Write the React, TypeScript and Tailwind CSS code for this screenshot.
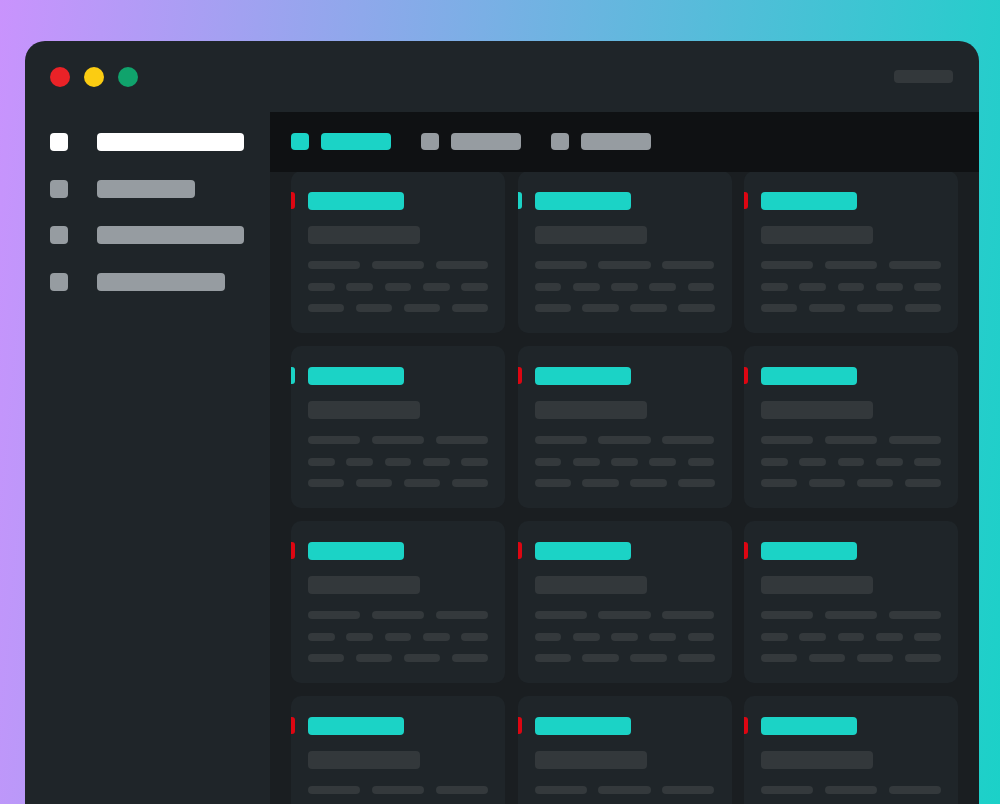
const navRows = [
  { bar: "w-[147px] bg-white", icon: "bg-white" },
  { bar: "w-[98px] bg-[#969ca1]", icon: "bg-[#969ca1]" },
  { bar: "w-[147px] bg-[#969ca1]", icon: "bg-[#969ca1]" },
  { bar: "w-[128px] bg-[#969ca1]", icon: "bg-[#969ca1]" },
];

const accents = ["red", "teal", "red", "teal", "red", "red", "red", "red", "red", "red", "red", "red"];

function Line({ count }: { count: number }) {
  return (
    <div className="flex gap-[11.5px]">
      {Array.from({ length: count }).map((_, i) => (
        <div key={i} className="h-2 flex-1 rounded-full bg-[#34393c]" />
      ))}
    </div>
  );
}

function Card({ accent }: { accent: string }) {
  return (
    <div className="relative h-[162px] rounded-[10px] bg-[#1f2529] px-[17px] pt-[21px]">
      <div
        className={`absolute left-0 top-[21px] h-[17px] w-1 rounded-r-[3px] ${
          accent === "red" ? "bg-[#dd0612]" : "bg-[#1bd3c6]"
        }`}
      />
      <div className="h-[17.5px] w-[96px] rounded-[4px] bg-[#1bd3c6]" />
      <div className="mt-[16.5px] h-[18px] w-[112px] rounded-[4px] bg-[#33383b]" />
      <div className="mt-[17px] flex flex-col gap-[13.5px]">
        <Line count={3} />
        <Line count={5} />
        <Line count={4} />
      </div>
    </div>
  );
}

function Tab({ active }: { active?: boolean }) {
  const color = active ? "bg-[#1bd3c6]" : "bg-[#969ca1]";
  return (
    <div className="flex items-center gap-[12.5px]">
      <div className={`h-[17.5px] w-[17.5px] rounded-[4px] ${color}`} />
      <div className={`h-[17.5px] w-[70px] rounded-[4px] ${color}`} />
    </div>
  );
}

export default function App() {
  return (
    <div className="h-[804px] overflow-hidden bg-[linear-gradient(95deg,#c993fd_0%,#1bd1c8_100%)] pl-[25px] pr-[21px] pt-[41px]">
      <div className="flex h-[800px] flex-col overflow-hidden rounded-t-[20px] bg-[#1f2529] blur-[0.5px]">
        <div className="flex h-[71px] shrink-0 items-center justify-between pl-[25px] pr-[26px]">
          <div className="flex gap-[14px]">
            <div className="h-5 w-5 rounded-full bg-[#ea2227]" />
            <div className="h-5 w-5 rounded-full bg-[#fbcc12]" />
            <div className="h-5 w-5 rounded-full bg-[#10a36c]" />
          </div>
          <div className="h-[13px] w-[59px] rounded-[4px] bg-[#33383b]" />
        </div>
        <div className="flex min-h-0 flex-1">
          <div className="flex w-[245px] shrink-0 flex-col gap-[28.67px] pl-[25px] pt-[21px]">
            {navRows.map((row, i) => (
              <div key={i} className="flex items-center gap-[29px]">
                <div className={`h-[18px] w-[18px] rounded-[4px] ${row.icon}`} />
                <div className={`h-[18px] rounded-[4px] ${row.bar}`} />
              </div>
            ))}
          </div>
          <div className="flex min-w-0 flex-1 flex-col bg-[#1a1e21]">
            <div className="relative z-10 flex h-[60px] shrink-0 items-center gap-[30px] bg-[#0f1113] pb-px pl-[21px]">
              <Tab active />
              <Tab />
              <Tab />
            </div>
            <div className="-mt-px grid grid-cols-3 gap-x-[12.5px] gap-y-[13px] pl-[21px] pr-[21px]">
              {accents.map((a, i) => (
                <Card key={i} accent={a} />
              ))}
            </div>
          </div>
        </div>
      </div>
    </div>
  );
}
